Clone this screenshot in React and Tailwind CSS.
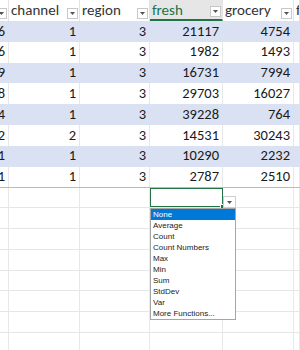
const FONT = { fontFamily: "Calibri, Carlito, 'Liberation Sans', Arial, sans-serif" };

const rows = [
  ["6", 1, 3, 21117, 4754],
  ["6", 1, 3, 1982, 1493],
  ["9", 1, 3, 16731, 7994],
  ["8", 1, 3, 29703, 16027],
  ["4", 1, 3, 39228, 764],
  ["2", 2, 3, 14531, 30243],
  ["1", 1, 3, 10290, 2232],
  ["1", 1, 3, 2787, 2510],
];

const widths = ["w-[9px]", "w-[71px]", "w-[70px]", "w-[73px]", "w-[71px]", "flex-1"];

const functions = [
  "None",
  "Average",
  "Count",
  "Count Numbers",
  "Max",
  "Min",
  "Sum",
  "StdDev",
  "Var",
  "More Functions...",
];

function Arrow() {
  return (
    <svg width="5" height="3" viewBox="0 0 5 3">
      <path d="M0 0h5L2.5 3z" fill="#555" />
    </svg>
  );
}

function FilterButton() {
  return (
    <div className="absolute right-[1px] bottom-[2px] w-[11px] h-[11px] bg-white border border-[#c8c8c8] flex items-center justify-center">
      <Arrow />
    </div>
  );
}

function HeaderRow() {
  const heads = ["", "channel", "region", "fresh", "grocery", "f"];
  return (
    <div className="flex h-[21px] bg-white">
      {heads.map((h, i) => {
        const active = i === 3;
        return (
          <div
            key={i}
            className={`${widths[i]} relative shrink-0 h-full border-r border-[#e3e3e3] overflow-hidden flex items-start pt-[1px] pl-[2px] text-[15px] leading-[18px] ${
              active ? "bg-[#e6e6e6] text-[#217346] border-b-2 border-b-[#217346]" : "text-[#333]"
            }`}
          >
            {h}
            {i < 5 && <FilterButton />}
          </div>
        );
      })}
    </div>
  );
}

function DataRow({ r, band }) {
  const cells = [...r, ""];
  return (
    <div className={`flex h-[20.8px] ${band ? "bg-[#d9e1f2]" : "bg-white"}`}>
      {cells.map((v, i) => (
        <div
          key={i}
          className={`${widths[i]} shrink-0 h-full border-r ${
            band ? "border-[#d9e1f2]" : "border-[#e8e8e8]"
          } overflow-hidden flex items-center justify-end pr-[3px] text-[14.5px] text-[#1a1a1a]`}
        >
          {v}
        </div>
      ))}
    </div>
  );
}

function EmptyRow({ total }) {
  return (
    <div
      className={`flex h-[20.8px] bg-white border-b border-[#e6e6e6] ${
        total ? "border-t border-t-[#a9bde2]" : ""
      }`}
    >
      {widths.map((w, i) => {
        const active = total && i === 3;
        return (
          <div
            key={i}
            className={`${w} shrink-0 h-full relative ${
              active ? "border border-[#217346]" : "border-r border-[#e8e8e8]"
            }`}
          >
            {active && (
              <div className="absolute -right-[3px] -bottom-[3px] w-[5px] h-[5px] bg-[#217346] border border-white" />
            )}
          </div>
        );
      })}
    </div>
  );
}

export default function App() {
  return (
    <div className="relative w-[300px] h-[350px] overflow-hidden bg-white" style={FONT}>
      <HeaderRow />
      {rows.map((r, i) => (
        <DataRow key={i} r={r} band={i % 2 === 0} />
      ))}
      <EmptyRow total />
      {Array.from({ length: 7 }).map((_, i) => (
        <EmptyRow key={i} />
      ))}

      <div className="absolute left-[223px] top-[196px] w-[13px] h-[12px] bg-white border border-[#cfcfcf] flex items-center justify-center">
        <Arrow />
      </div>

      <div
        className="absolute left-[150px] top-[208px] w-[86px] h-[112px] bg-white border border-[#a6a6a6] flex flex-col"
        style={{ fontFamily: "'Liberation Sans', Arial, sans-serif" }}
      >
        {functions.map((f, i) => (
          <div
            key={f}
            className={`h-[11.1px] leading-[11px] text-[8px] pl-[2px] ${
              i === 0 ? "bg-[#0078d7] text-white" : "text-[#222]"
            }`}
          >
            {f}
          </div>
        ))}
      </div>
    </div>
  );
}
